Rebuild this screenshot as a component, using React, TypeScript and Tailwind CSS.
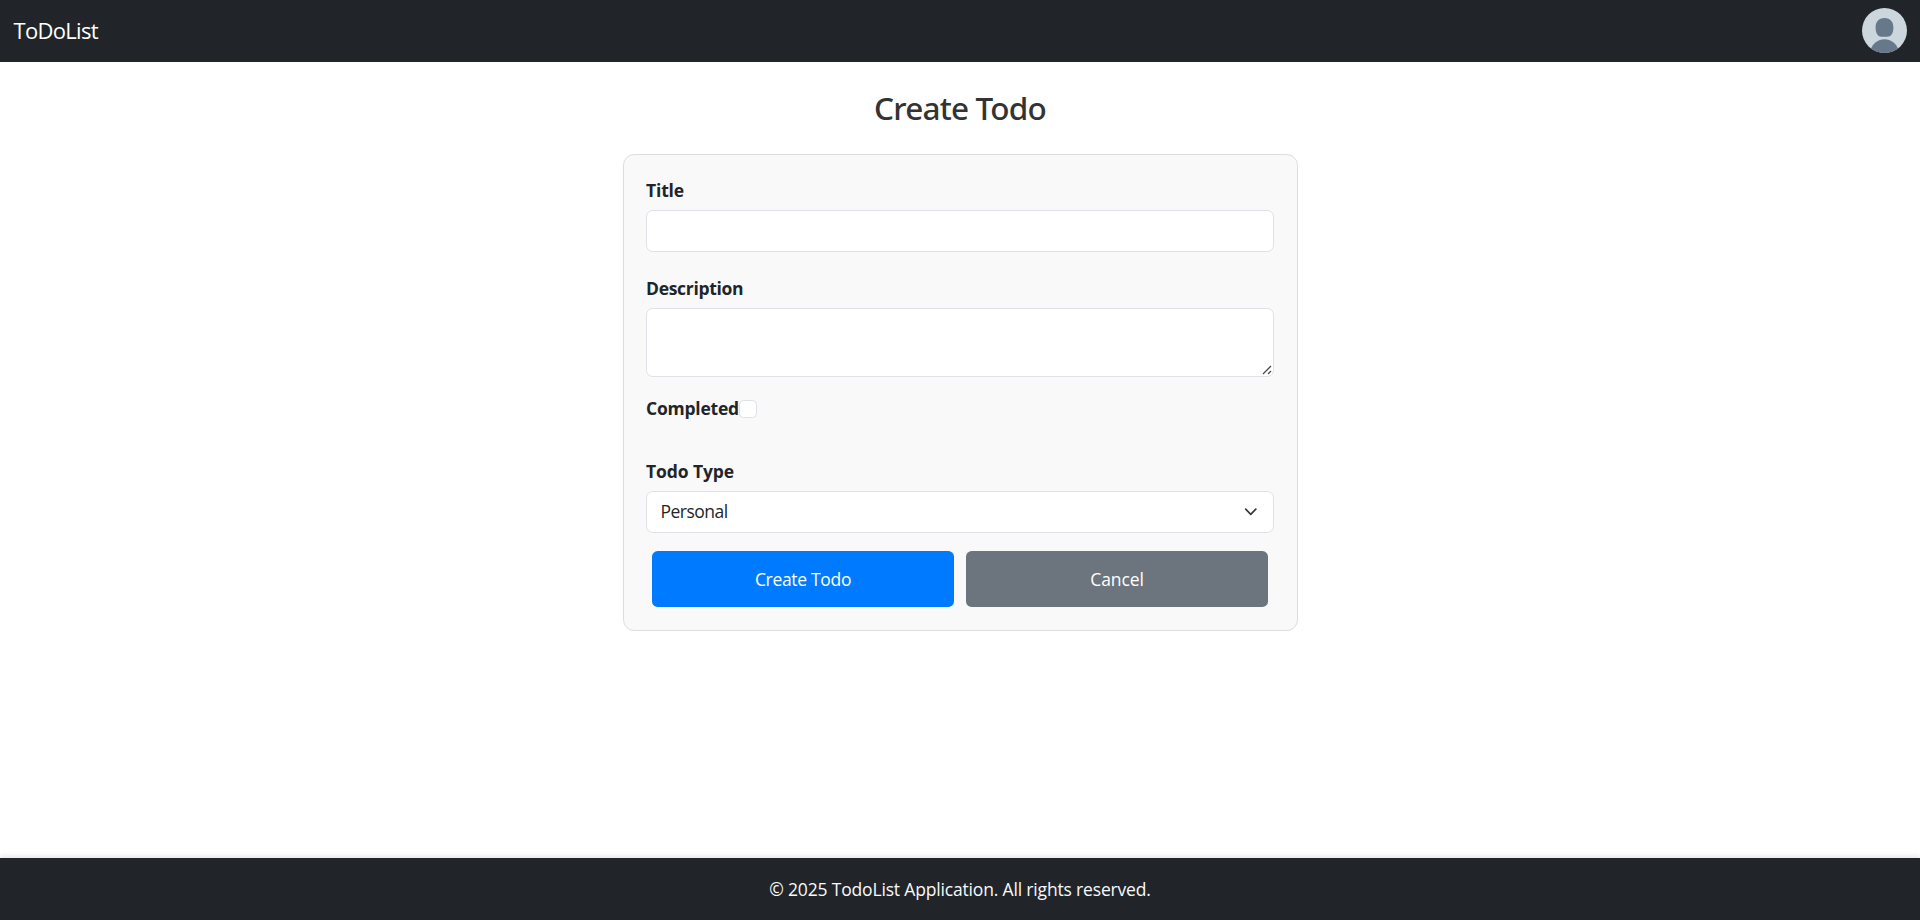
import type { ReactNode } from 'react';

function Avatar() {
  return (
    <svg className="mb-px size-[45px]" viewBox="0 0 45 45" aria-label="Profile">
      <defs>
        <clipPath id="avatar-clip">
          <circle cx="22.5" cy="22.5" r="22.5" />
        </clipPath>
      </defs>
      <g clipPath="url(#avatar-clip)">
        <rect width="45" height="45" fill="#ccd6dd" />
        <path
          fill="#66788a"
          d="M22.500 10c-5.800 0-8.900 4-8.900 9.300c0 5.500 2 9.500 5.800 9.500h6.200c3.800 0 5.800-4 5.800-9.500c0-5.300-3.100-9.300-8.900-9.300z"
        />
        <path fill="#66788a" d="M8.500 42c2-6.500 7.500-10.800 14-10.800s12 4.300 14 10.800v3h-28z" />
      </g>
    </svg>
  );
}

function Label({ htmlFor, className, children }: { htmlFor: string; className: string; children: ReactNode }) {
  return (
    <label htmlFor={htmlFor} className={`block leading-[27px] font-bold ${className}`}>
      {children}
    </label>
  );
}

export default function App() {
  return (
    <div className="flex h-[920px] flex-col bg-white font-['Open_Sans','Noto_Sans',sans-serif] text-[17.5px] text-[#212529]">
      <header className="flex h-[62px] shrink-0 items-center justify-between bg-[#212529] pr-[13px] pl-[13.5px]">
        <a className="mb-0.5 text-[22px] leading-[34px] tracking-[-0.7px] text-white">ToDoList</a>
        <Avatar />
      </header>

      <main className="flex flex-1 flex-col items-center">
        <h2 className="mt-[25px] font-['Noto_Sans',sans-serif] text-[31.5px] leading-[42px] font-medium tracking-[-0.8px] text-[#333]">
          Create Todo
        </h2>
        <form className="mt-[25px] flex h-[477px] w-[675px] flex-col rounded-[11.25px] border border-[#ddd] bg-[#f9f9f9] px-[22.5px] pt-[22px]">
          <Label htmlFor="title" className="tracking-[-0.15px]">Title</Label>
          <input
            id="title"
            className="mt-1.5 h-[42px] w-full rounded-[6.75px] border border-[#dee2e6] bg-white px-[13.5px] outline-none"
          />
          <Label htmlFor="description" className="mt-[23px] tracking-[-0.3px]">Description</Label>
          <div className="relative mt-1.5 h-[69px]">
            <textarea
              id="description"
              className="block h-full w-full resize-none rounded-[6.75px] border border-[#dee2e6] bg-white px-[13.5px] py-1.5 outline-none"
            />
            <svg className="absolute right-0.5 bottom-0.5 size-[10px]" viewBox="0 0 10 10" fill="none">
              <path d="M1 9l8-8M6 9l3-3" stroke="#4a4a4a" strokeWidth="1.300" />
            </svg>
          </div>
          <div className="mt-[18px] flex h-[27px] items-center">
            <Label htmlFor="completed" className="w-[93px] tracking-[-0.22px] whitespace-nowrap">Completed</Label>
            <input
              id="completed"
              type="checkbox"
              className="size-[18px] appearance-none rounded-[4.5px] border border-[#dee2e6] bg-white"
            />
          </div>
          <Label htmlFor="type" className="mt-9 tracking-[-0.1px]">Todo Type</Label>
          <div
            id="type"
            role="combobox"
            className="mt-1.5 flex h-[42px] w-full items-center justify-between rounded-[6.75px] border border-[#dee2e6] bg-white pr-4 pl-[13.5px]"
          >
            <span className="mb-0.5 leading-[27px] tracking-[-0.5px]">Personal</span>
            <svg className="h-[13.5px] w-[13.5px]" viewBox="0 0 16 16" fill="none">
              <path d="m2 5 6 6 6-6" stroke="#343a40" strokeWidth="2" strokeLinecap="round" strokeLinejoin="round" />
            </svg>
          </div>
          <div className="mt-[18px] flex gap-3 px-1.5 text-white">
            <button type="submit" className="h-14 flex-1 rounded-[5.6px] bg-[#007bff] leading-[27px] tracking-[-0.32px]">
              Create Todo
            </button>
            <button type="button" className="h-14 flex-1 rounded-[5.6px] bg-[#6c757d] leading-[27px] tracking-[-0.1px]">
              Cancel
            </button>
          </div>
        </form>
      </main>

      <footer className="flex h-[62px] shrink-0 items-center justify-center bg-[#212529] leading-[27px] tracking-[-0.17px] text-[#f8f9fa] shadow-[0_-2px_5px_rgba(0,0,0,0.1)]">
        © 2025 TodoList Application. All rights reserved.
      </footer>
    </div>
  );
}
